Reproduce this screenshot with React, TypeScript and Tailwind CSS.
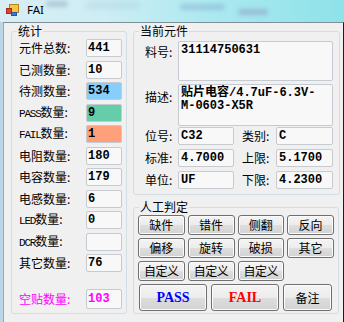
import React from "react";

const mono = "font-['Liberation_Mono','Noto_Sans_CJK_SC',monospace]";
const boxBase = "border border-[#c6cbd1] rounded-[2px]";

function Lat({ children }: { children: React.ReactNode }) {
  return <span className="font-['Liberation_Mono',monospace] text-[11px] tracking-[-1.2px]">{children}</span>;
}

function Btn({ children, className = "" }: { children: React.ReactNode; className?: string }) {
  return (
    <div
      className={`flex items-center justify-center rounded-[3px] border border-[#707070] bg-[linear-gradient(to_bottom,#f4f4f4_0%,#ececec_50%,#dedede_51%,#d2d2d2_100%)] shadow-[inset_0_0_0_1px_#fbfbfb] ${className}`}
    >
      {children}
    </div>
  );
}

const stats: { label: React.ReactNode; value: string; bg?: string }[] = [
  { label: "元件总数:", value: "441" },
  { label: "已测数量:", value: "10" },
  { label: "待测数量:", value: "534", bg: "bg-[#87cefa]" },
  { label: <><Lat>PASS</Lat>数量:</>, value: "9", bg: "bg-[#66cdaa]" },
  { label: <><Lat>FAIL</Lat>数量:</>, value: "1", bg: "bg-[#ffa07a]" },
  { label: "电阻数量:", value: "180" },
  { label: "电容数量:", value: "179" },
  { label: "电感数量:", value: "6" },
  { label: <><Lat>LED</Lat>数量:</>, value: "0" },
  { label: <><Lat>DCR</Lat>数量:</>, value: "" },
  { label: "其它数量:", value: "76" },
];

function TitleBar() {
  return (
    <div className="relative h-[22px] shrink-0 overflow-hidden bg-[linear-gradient(90deg,#d9edf4_0%,#cdeef4_30%,#ade9f0_60%,#8ee2e9_100%)]">
      {/* blurred aero glass smudges */}
      <div className="absolute left-[46px] top-[1px] h-[6px] w-[22px] rounded-full bg-[#7d93b0] opacity-40 blur-[2px]" />
      <div className="absolute left-[85px] top-[3px] h-[5px] w-[55px] rounded-full bg-[#8fb0c8] opacity-30 blur-[3px]" />
      <div className="absolute left-[180px] top-[4px] h-[6px] w-[45px] rounded-full bg-[#7c9cc6] opacity-40 blur-[2px]" />
      <div className="absolute left-[238px] top-[9px] h-[6px] w-[30px] rounded-full bg-[#8a7fb8] opacity-40 blur-[2px]" />
      <div className="relative flex items-start gap-[8px] pl-[6px] pt-[3px]">
        <svg width="13" height="12" viewBox="0 0 13 12" className="mt-[1px]">
          <rect x="3.5" y="0.5" width="9" height="8" fill="#f6c443" stroke="#b8821c" />
          <rect x="0.5" y="4.5" width="5" height="5" fill="#e2432f" stroke="#a52a1a" />
          <rect x="5.5" y="8.5" width="5" height="3" fill="#3d7bd6" stroke="#2456a0" />
        </svg>
        <span className="font-['Noto_Sans',sans-serif] text-[11.5px] leading-[14px] text-black">FAI</span>
      </div>
    </div>
  );
}

export default function App() {
  return (
    <div className="flex h-[322px] w-[344px] flex-col overflow-hidden bg-[#f0f0f0] font-['Noto_Sans_CJK_SC',sans-serif] text-[12px] text-black">
      <TitleBar />
      <div className="flex flex-1 border-l-[3px] border-l-[#bcd6e8]">
        <div className="flex flex-1 gap-[6px] border-l border-r border-t border-l-[#9aa8b3] border-r-[#1c1c1c] border-t-[#7f8e98] pl-[7px] pr-[4px]">
          {/* 统计 */}
          <fieldset className="h-[291px] w-[116px] rounded-[3px] border border-[#d3dde4]">
            <legend className="ml-[5px] px-[1px] leading-[16px]">统计</legend>
            <div className="flex flex-col gap-[3.5px] pl-[7px] pr-[4px]">
              {stats.map((s, i) => (
                <div key={i} className="flex h-[18px] items-center">
                  <div className="flex-1 whitespace-nowrap leading-[16px]">{s.label}</div>
                  <div className={`h-[18px] w-[36px] ${boxBase} ${s.bg ?? "bg-[#f8f8f8]"} pl-[1px] pt-[1px] ${mono} text-[12px] font-bold leading-[14px]`}>
                    {s.value}
                  </div>
                </div>
              ))}
              <div className="mt-[13px] flex h-[20px] items-center text-[#ff00ff]">
                <div className="flex-1 whitespace-nowrap leading-[16px]">空贴数量:</div>
                <div className={`h-[20px] w-[36px] ${boxBase} bg-[#f8f8f8] pl-[1px] pt-[2px] ${mono} text-[12px] font-bold leading-[14px]`}>
                  103
                </div>
              </div>
            </div>
          </fieldset>

          <div className="flex w-[206px] flex-col">
            {/* 当前元件 */}
            <fieldset className="h-[172px] rounded-[3px] border border-[#d3dde4]">
              <legend className="ml-[5px] px-[1px] leading-[16px]">当前元件</legend>
              <div className="flex flex-col pl-[11px] pr-[6px]">
                <div className="mt-[2px] flex h-[40px]">
                  <div className="w-[33px] pt-[3px] leading-[16px]">料号:</div>
                  <div className={`flex-1 ${boxBase} bg-[#f8f8f8] pl-[2px] pt-[1px] ${mono} text-[12px] font-bold leading-[14px]`}>
                    31114750631
                  </div>
                </div>
                <div className="mt-[3px] flex h-[42px]">
                  <div className="w-[33px] pt-[5px] leading-[16px]">描述:</div>
                  <div className={`flex-1 ${boxBase} bg-[#f8f8f8] pl-[2px] pt-[2px] ${mono} text-[12px] font-bold leading-[13px]`}>
                    <div className="whitespace-nowrap">贴片电容/4.7uF-6.3V-</div>
                    <div className="whitespace-nowrap">M-0603-X5R</div>
                  </div>
                </div>
                <div className="mt-[1px] grid grid-cols-[33px_56px_8px_34px_57px] gap-y-[4px]">
                  {[
                    ["位号:", "C32", "类别:", "C"],
                    ["标准:", "4.7000", "上限:", "5.1700"],
                    ["单位:", "UF", "下限:", "4.2300"],
                  ].map((r, i) => (
                    <React.Fragment key={i}>
                      <div className="flex h-[18px] items-center leading-[16px]">{r[0]}</div>
                      <div className={`h-[18px] ${boxBase} bg-[#f8f8f8] pl-[2px] pt-[1px] ${mono} text-[12px] font-bold leading-[14px]`}>{r[1]}</div>
                      <div />
                      <div className="flex h-[18px] items-center leading-[16px]">{r[2]}</div>
                      <div className={`h-[18px] ${boxBase} bg-[#f8f8f8] pl-[2px] pt-[1px] ${mono} text-[12px] font-bold leading-[14px]`}>{r[3]}</div>
                    </React.Fragment>
                  ))}
                </div>
              </div>
            </fieldset>

            {/* 人工判定 */}
            <fieldset className="mt-[4px] h-[115px] rounded-[3px] border border-[#d3dde4]">
              <legend className="ml-[5px] px-[1px] leading-[16px]">人工判定</legend>
              <div className="flex flex-col gap-[3px] pl-[4px] pr-[4px]">
                <div className="grid grid-cols-4 gap-x-[3px]">
                  {["缺件", "错件", "侧翻", "反向", "偏移", "旋转", "破损", "其它"].map((t, i) => (
                    <Btn key={i} className={`h-[20px] ${i >= 4 ? "mt-[3px]" : ""}`}>{t}</Btn>
                  ))}
                </div>
                <div className="grid grid-cols-4 gap-x-[3px]">
                  {["自定义", "自定义", "自定义"].map((t, i) => (
                    <Btn key={i} className="h-[20px] tracking-[-0.5px]">{t}</Btn>
                  ))}
                </div>
                <div className="ml-[1px] flex gap-[4px]">
                  <Btn className="h-[27px] w-[68px] font-['Liberation_Serif',serif] text-[14px] font-bold text-[#0000ff]">PASS</Btn>
                  <Btn className="h-[27px] w-[68px] font-['Liberation_Serif',serif] text-[14px] font-bold text-[#ff0000]">FAIL</Btn>
                  <Btn className="h-[27px] w-[49px]">备注</Btn>
                </div>
              </div>
            </fieldset>
          </div>
        </div>
      </div>
    </div>
  );
}
